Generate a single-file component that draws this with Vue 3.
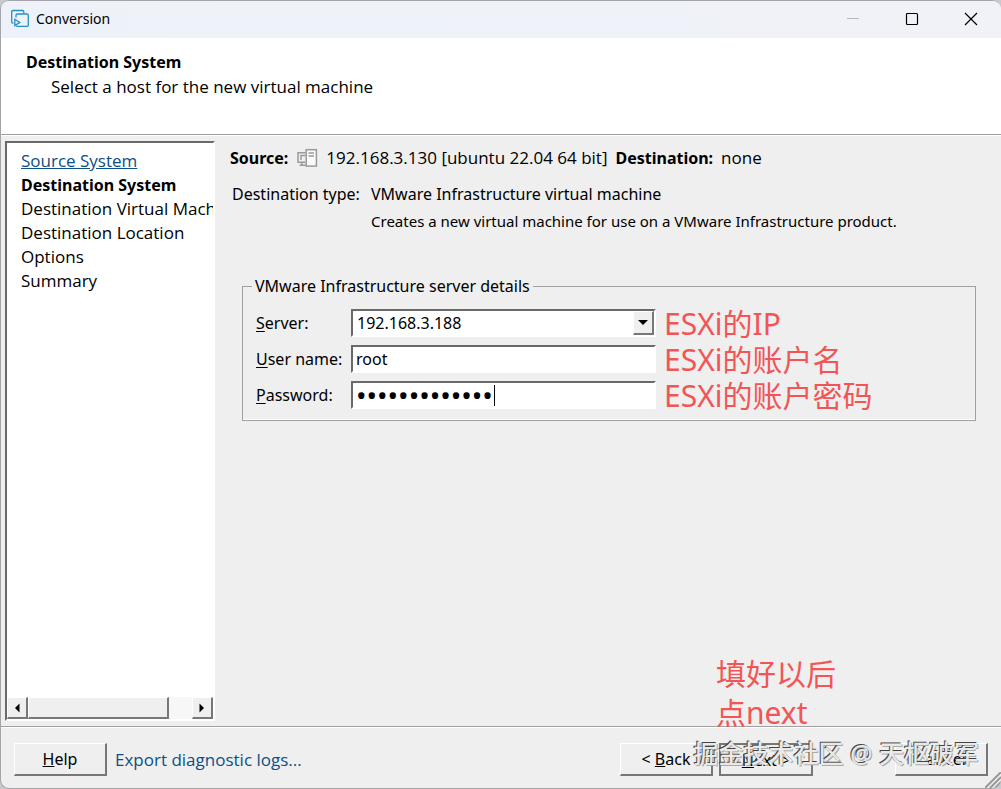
<script setup>
import { ref } from 'vue'

const server = ref('192.168.3.188')
const user = ref('root')
const password = ref('0123456789abc')
const steps = [
  { label: 'Destination Virtual Machine' },
  { label: 'Destination Location' },
  { label: 'Options' },
  { label: 'Summary' },
]
</script>

<template>
  <div class="desktop">
    <main class="window">
      <header class="titlebar">
        <svg class="app-icon" viewBox="0 0 20 20" width="20" height="20" fill="none" stroke="#2a8fc0" stroke-width="1.3">
          <path d="M3.5 14.2H3Q1.7 14.2 1.7 12.9V2.8Q1.7 1.5 3 1.5H12.5Q13.8 1.5 13.8 2.8V4.5" />
          <path d="M6 8.5V6.3Q6 5 7.3 5H17Q18.3 5 18.3 6.3V16Q18.3 17.3 17 17.3H7.3Q6.2 17.3 6 16.6" />
          <path d="M4.8 10.3 9.8 13.4 4.8 16.5Z" />
        </svg>
        <h1>Conversion</h1>
        <div class="controls">
          <button aria-label="Minimize" disabled><svg width="14" height="14" viewBox="0 0 14 14"><path d="M1 6.5H13" stroke="#b5b8bf" /></svg></button>
          <button aria-label="Maximize"><svg width="14" height="14" viewBox="0 0 14 14"><rect x="1.5" y="1.5" width="11" height="11" rx="1" fill="none" stroke="#000" stroke-width="1.2" /></svg></button>
          <button aria-label="Close"><svg width="14" height="14" viewBox="0 0 14 14"><path d="M1 1 13 13M13 1 1 13" stroke="#000" stroke-width="1.2" /></svg></button>
        </div>
      </header>

      <section class="heading">
        <h2>Destination System</h2>
        <p>Select a host for the new virtual machine</p>
      </section>

      <div class="body">
        <nav class="steps">
          <ol>
            <li><a href="#source">Source System</a></li>
            <li class="current">Destination System</li>
            <li v-for="s in steps" :key="s.label">{{ s.label }}</li>
          </ol>
          <div class="scrollbar">
            <button aria-label="Scroll left"><svg width="6" height="10" viewBox="0 0 6 10"><path d="M5.5 0.5V9.5L1 5Z" /></svg></button>
            <div class="thumb"></div>
            <div class="track"></div>
            <button aria-label="Scroll right"><svg width="6" height="10" viewBox="0 0 6 10"><path d="M.5 .5V9.5L5 5Z" /></svg></button>
          </div>
        </nav>

        <section class="content">
          <p class="summary">
            <b>Source:</b>
            <svg width="22" height="20" viewBox="0 0 22 20" fill="none" stroke="#9a9a9a" stroke-width="1.5">
              <path d="M9.5 4.7H2V14.3H9.5M5 12V7.5H9.5M6 14.5V17.3M3.5 17.3H9.5" />
              <rect x="10.2" y="1.7" width="10.2" height="16.4" fill="#fafafa" />
              <path d="M12.5 5H18M12.5 8H18" />
            </svg>
            <span>192.168.3.130 [ubuntu 22.04 64 bit]</span>
            <b>Destination:</b>
            <span>none</span>
          </p>
          <dl class="type">
            <dt>Destination type:</dt>
            <dd>VMware Infrastructure virtual machine</dd>
            <dd class="note">Creates a new virtual machine for use on a VMware Infrastructure product.</dd>
          </dl>
          <fieldset>
            <legend>VMware Infrastructure server details</legend>
            <div class="fields">
              <label for="server"><u>S</u>erver:</label>
              <div class="combo">
                <input id="server" v-model="server" type="text">
                <button aria-label="Show servers"><svg width="10" height="5" viewBox="0 0 10 5"><path d="M0 0H10L5 5Z" /></svg></button>
              </div>
              <span class="remark">ESXi的IP</span>
              <label for="user"><u>U</u>ser name:</label>
              <input id="user" v-model="user" class="box" type="text">
              <span class="remark">ESXi的账户名</span>
              <label for="password"><u>P</u>assword:</label>
              <div class="secret">
                <input id="password" v-model="password" class="box" type="password">
                <span class="caret"></span>
              </div>
              <span class="remark">ESXi的账户密码</span>
            </div>
          </fieldset>
          <p class="remark hint">填好以后<br>点next</p>
        </section>
      </div>

      <footer class="footer">
        <button class="push"><u>H</u>elp</button>
        <a href="#logs">Export dia<u>g</u>nostic logs...</a>
        <button class="push back">&lt; <u>B</u>ack</button>
        <button class="push next"><u>N</u>ext &gt;</button>
        <button class="push cancel">Cancel</button>
        <span class="watermark">掘金技术社区 @ 天枢破军</span>
        <svg class="grip" width="16" height="16" viewBox="0 0 16 16" fill="none" stroke="#999" stroke-width="2"><path d="M0 16 16 0M5 16 16 5M10 16 16 10" /></svg>
      </footer>
    </main>
  </div>
</template>

<style>
body {
  margin: 0;
}
</style>

<style scoped>
* {
  box-sizing: border-box;
}
.desktop {
  display: flex;
  min-height: 100vh;
  background: #c9cacf;
  font: 16px/24px "Noto Sans", "Noto Sans CJK SC", sans-serif;
  color: #000;
}
h1, h2, p, ol, dl, dd {
  margin: 0;
  padding: 0;
  font-size: inherit;
}
button, input {
  font: inherit;
  color: inherit;
}
.window {
  flex: 1;
  min-width: 0;
  display: flex;
  flex-direction: column;
  background: #efefef;
  border: 1px solid #a5a5a9;
  border-right: 0;
  border-radius: 9px;
  overflow: hidden;
}
.titlebar {
  display: flex;
  align-items: center;
  height: 37px;
  padding: 0 1px 1px 9px;
  background: linear-gradient(90deg, #edf2fa, #f1f2f8);
}
.titlebar h1 {
  flex: 1;
  margin-left: 6px;
  font-size: 14px;
  font-weight: 400;
}
.controls {
  display: flex;
}
.controls button {
  display: flex;
  align-items: center;
  justify-content: center;
  width: 59px;
  height: 36px;
  padding: 0;
  border: 0;
  background: none;
}
.heading {
  height: 97px;
  padding: 12px 25px;
  background: #fff;
  border-bottom: 1px solid #a0a0a0;
}
.heading p {
  margin: 1px 0 0 25px;
}
.heading p, .steps li:not(.current), .summary span, .footer a {
  font-family: "Open Sans", sans-serif;
  font-size: 17px;
}
.body {
  flex: 1;
  display: flex;
  padding: 5px 0 5px 4px;
  border-top: 1px solid #fff;
  border-bottom: 1px solid #a0a0a0;
}
.steps {
  display: flex;
  flex-direction: column;
  width: 210px;
  background: #fff;
  border: 2px solid;
  border-color: #696969 #fff #fff #696969;
}
.steps ol {
  flex: 1;
  padding: 6px 0 0 14px;
  list-style: none;
  overflow: hidden;
  white-space: nowrap;
}
.steps a {
  color: #0b4f85;
}
.current, h2 {
  font-weight: 700;
}
.scrollbar {
  display: flex;
  height: 22px;
  background: #f7f7f7;
}
.scrollbar button, .thumb, .combo button {
  display: flex;
  align-items: center;
  justify-content: center;
  width: 21px;
  padding: 0;
  background: #efefef;
  border: solid;
  border-width: 1px 2px 2px 1px;
  border-color: #fff #777 #777 #fff;
}
.scrollbar .thumb {
  flex: 6;
}
.track {
  flex: 1;
}
.content {
  position: relative;
  flex: 1;
  min-width: 0;
  padding: 5px 25px 0 15px;
}
.summary {
  display: flex;
  align-items: center;
  gap: 8px;
}
.type {
  display: grid;
  grid-template-columns: 139px 1fr;
  row-gap: 3px;
  margin: 12px 0 0 2px;
}
.note {
  grid-column: 2;
  font-size: 15px;
}
fieldset {
  margin: 41px 0 0 12px;
  padding: 11px 11px 11px;
  border: 1px solid #a0a0a0;
  box-shadow: inset 0 -1px #fff;
}
legend {
  padding: 0 3px;
  margin-left: -2px;
}
.fields {
  display: grid;
  grid-template-columns: 97px minmax(0, 305px) 1fr;
  grid-template-rows: 28px 28px 28px;
  row-gap: 8px;
  align-items: center;
}
.fields label {
  padding-left: 2px;
}
.fields u {
  text-underline-offset: 2px;
}
.box, .combo {
  width: 100%;
  height: 28px;
  border: 2px solid;
  border-color: #696969 #fff #fff #696969;
  border-radius: 0;
  background: #fff;
  outline: 0;
}
.box {
  padding: 0 3px;
}
.combo {
  display: flex;
}
.combo input {
  flex: 1;
  min-width: 0;
  padding: 0 4px;
  border: 0;
  background: none;
}
.secret {
  position: relative;
  display: flex;
}
.secret .box {
  font-size: 28px;
}
.caret {
  position: absolute;
  left: 143px;
  top: 4px;
  width: 1px;
  height: 21px;
  background: #000;
}
.remark {
  padding-left: 8px;
  font-size: 30px;
  line-height: 39px;
  white-space: nowrap;
  color: #f25555;
}
.hint {
  position: absolute;
  right: 165px;
  bottom: -11px;
  padding: 0;
}
.footer {
  position: relative;
  display: flex;
  align-items: center;
  height: 61px;
  padding: 3px 13px 0;
  border-top: 1px solid #fff;
}
.push {
  width: 93px;
  height: 33px;
  padding: 0;
  background: #efefef;
  border: solid;
  border-width: 1px 2px 2px 1px;
  border-color: #fff #777 #777 #fff;
}
.footer a {
  margin-left: 8px;
  color: #0b4f85;
  text-decoration: none;
}
.back {
  margin-left: auto;
}
.next {
  width: 94px;
  margin-left: 6px;
  border-width: 2px;
  border-color: #777;
}
.cancel {
  margin-left: 82px;
}
.watermark {
  position: absolute;
  right: 22px;
  top: 7px;
  font-size: 25px;
  line-height: 36px;
  font-weight: 500;
  white-space: nowrap;
  color: #e9e9e9;
  text-shadow: -1px -1px #444, 1px 1px #aaa;
}
.grip {
  position: absolute;
  right: 0;
  bottom: 0;
}
</style>
